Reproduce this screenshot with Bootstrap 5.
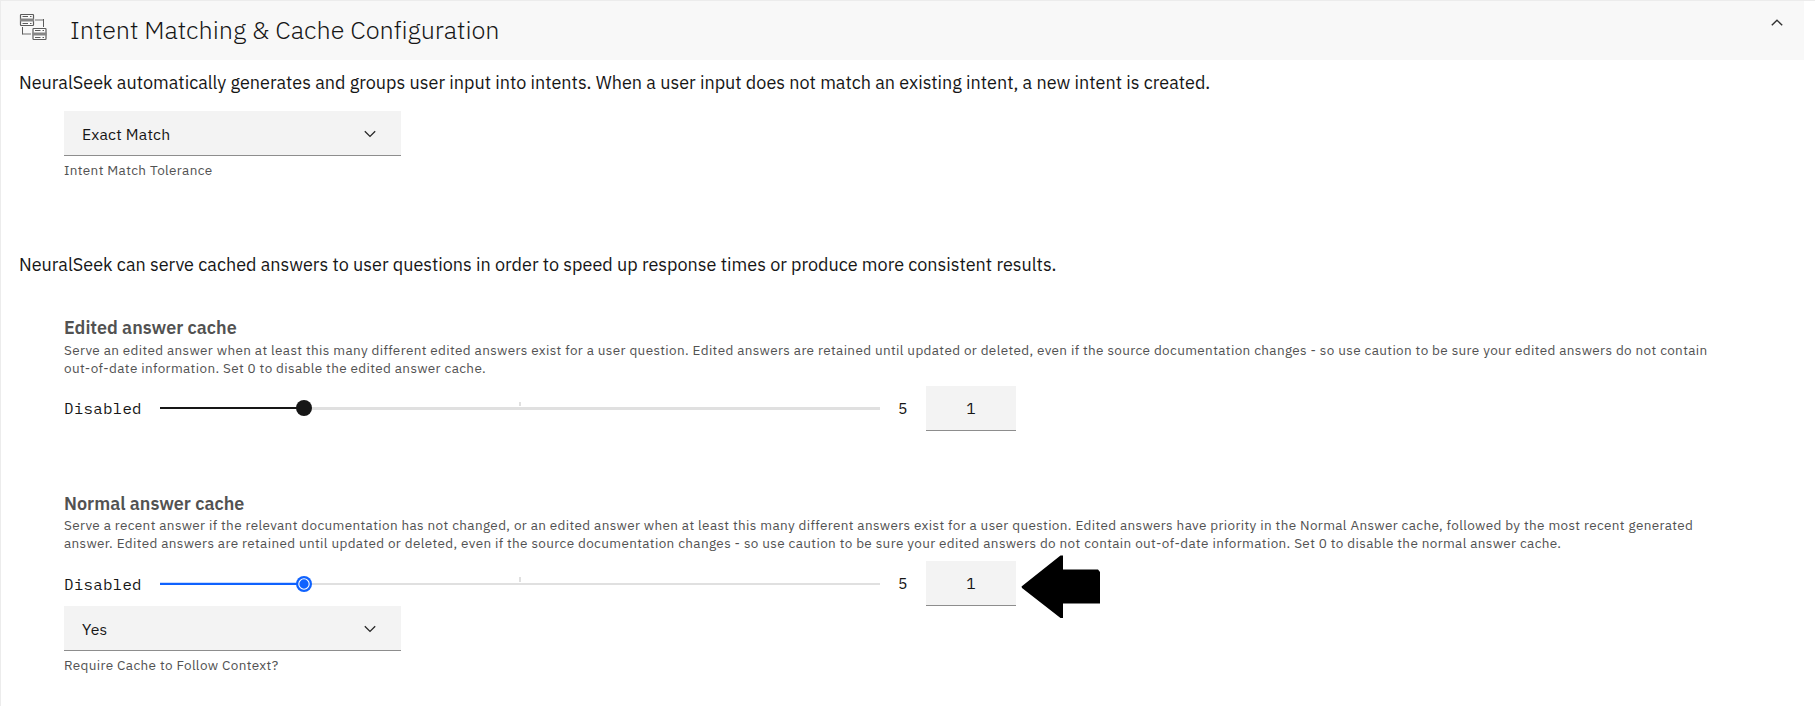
<!DOCTYPE html>
<html lang="en">
<head>
<meta charset="utf-8">
<meta name="viewport" content="width=device-width, initial-scale=1">
<title>Intent Matching &amp; Cache Configuration</title>
<link rel="stylesheet" href="https://cdn.jsdelivr.net/npm/bootstrap@5.3.0/dist/css/bootstrap.min.css">
<style>
  body { font-family: "IBM Plex Sans", Roboto, sans-serif; color: #161616; background: #fff; overflow: hidden; }
  .panel { min-height: 706px; border-top: 1px solid #ececec; border-left: 1px solid #ececec; }
  .panel-head { height: 59px; width: 1803px; background: #f8f8f8; padding: 12px 21px 0 18px; }
  .panel-head h1 { font-size: 25.2px; font-weight: 300; line-height: 30px; letter-spacing: -.04px; margin: 2px 0 0 23px; }
  .panel-body { padding: 11px 0 0 18px; }
  .intro { font-size: 18px; line-height: 24px; margin: 0; }
  .intro.cache { margin-top: 74px; }
  .group { padding-left: 45px; }
  .field { height: 45px; background: #f3f3f3; border: 0; border-bottom: 1px solid #8d8d8d; border-radius: 0; font-size: 15.75px; line-height: 22px; letter-spacing: .18px; color: #161616; }
  .picker { width: 337px; padding: 1px 25px 0 18px; }
  .amount { width: 90px; margin-left: 18px; padding: 0; text-align: center; }
  .helper, .about { font-size: 13.5px; line-height: 18px; letter-spacing: .36px; color: #525252; margin: 0; }
  .helper { margin-top: 5px; }
  .about { max-width: 1660px; }
  .group h2 { font-size: 18px; font-weight: 600; line-height: 24px; color: #525252; margin: 0; }
  .low { font: 15.75px/22px "IBM Plex Mono", "Liberation Mono", monospace; letter-spacing: .28px; width: 96px; }
  .high { font-size: 15.75px; margin-left: 18px; width: 10px; }
  .rail { width: 720px; height: 45px; }
  .levels { margin-top: 9px; height: 45px; }
  .pointer { margin: -6px 0 -13px 5px; }
  .edited { margin-top: 39px; }
  .edited .about { padding-top: 1px; }
  .edited .low { padding-bottom: 2px; }
  .normal { margin-top: 61px; }
</style>
</head>
<body>
<main class="panel">
  <header class="panel-head d-flex align-items-start">
    <svg width="28" height="28" viewBox="0 0 28 28" fill="none" stroke="#5c5c5c" aria-hidden="true">
      <g id="server">
        <rect x="1.5" y="1.5" width="13" height="11" rx=".7" fill="#fbfbfb" stroke-width="1.2"/>
        <path d="M1 7H15" stroke="#858585" stroke-width="3"/>
        <path d="M3.5 3.5H9M11 3.5H12.5M3.5 10.5H9M11 10.5H12.5"/>
      </g>
      <use href="#server" x="12.5" y="14"/>
      <path d="M16 7H25M3.5 21H12" stroke="#b3b3b3" stroke-width="2"/>
      <path d="M24.5 6V14M3.5 14V21.5"/>
    </svg>
    <h1>Intent Matching &amp; Cache Configuration</h1>
    <svg class="ms-auto mt-1" width="12" height="10" viewBox="0 0 12 10" fill="none" stroke="#333" stroke-width="1.4" aria-hidden="true"><path d="M.8 8.3 6 3.2 11.2 8.3"/></svg>
  </header>
  <div class="panel-body">
    <p class="intro">NeuralSeek automatically generates and groups user input into intents. When a user input does not match an existing intent, a new intent is created.</p>
    <section class="group pt-3">
      <button type="button" class="field picker d-flex align-items-center justify-content-between">Exact Match
        <svg width="12" height="8" viewBox="0 0 12 8" fill="none" stroke="#262626" stroke-width="1.3" aria-hidden="true"><path d="M.8 1.2 6 6.4 11.2 1.2"/></svg>
      </button>
      <p class="helper">Intent Match Tolerance</p>
    </section>

    <p class="intro cache">NeuralSeek can serve cached answers to user questions in order to speed up response times or produce more consistent results.</p>
    <section class="group edited">
      <h2>Edited answer cache</h2>
      <p class="about">Serve an edited answer when at least this many different edited answers exist for a user question. Edited answers are retained until updated or deleted, even if the source documentation changes - so use caution to be sure your edited answers do not contain out-of-date information. Set 0 to disable the edited answer cache.</p>
      <div class="levels d-flex align-items-center">
        <span class="low">Disabled</span>
        <svg class="rail" viewBox="0 0 720 45" role="img" aria-label="Edited answer cache: 1 of 5">
          <path fill="#e0e0e0" d="M144 21H720V24H144ZM359 16H361V20H359Z"/>
          <path fill="#161616" d="M0 21H144V23H0Z"/>
          <circle cx="144" cy="22" r="8" fill="#161616"/>
        </svg>
        <span class="high">5</span>
        <input class="field amount" type="text" value="1" aria-label="Edited answers">
      </div>
    </section>

    <section class="group normal">
      <h2>Normal answer cache</h2>
      <p class="about">Serve a recent answer if the relevant documentation has not changed, or an edited answer when at least this many different answers exist for a user question. Edited answers have priority in the Normal Answer cache, followed by the most recent generated answer. Edited answers are retained until updated or deleted, even if the source documentation changes - so use caution to be sure your edited answers do not contain out-of-date information. Set 0 to disable the normal answer cache.</p>
      <div class="levels d-flex align-items-center">
        <span class="low">Disabled</span>
        <svg class="rail" viewBox="0 0 720 45" role="img" aria-label="Normal answer cache: 1 of 5">
          <path fill="#e0e0e0" d="M144 22H720V24H144ZM359 16H361V21H359Z"/>
          <path fill="#c9dbff" d="M0 21H144V22H0Z"/>
          <path fill="#0f62fe" d="M0 22H144V24H0Z"/>
          <circle cx="144" cy="23" r="8" fill="#0f62fe"/>
          <circle cx="144" cy="23" r="5.2" fill="none" stroke="#fff" stroke-width="1.1"/>
        </svg>
        <span class="high">5</span>
        <input class="field amount" type="text" value="1" aria-label="Normal answers">
        <svg class="pointer" width="79" height="64" viewBox="0 0 79 64" aria-hidden="true"><path d="M.5 31.5 39.5 .5H42V14.5H77L79 17V48.5H42V63H39.5L1 33Z"/></svg>
      </div>
      <button type="button" class="field picker d-flex align-items-center justify-content-between">Yes
        <svg width="12" height="8" viewBox="0 0 12 8" fill="none" stroke="#262626" stroke-width="1.3" aria-hidden="true"><path d="M.8 1.2 6 6.4 11.2 1.2"/></svg>
      </button>
      <p class="helper">Require Cache to Follow Context?</p>
    </section>
  </div>
</main>
<script src="https://cdn.jsdelivr.net/npm/bootstrap@5.3.0/dist/js/bootstrap.bundle.min.js"></script>
</body>
</html>
